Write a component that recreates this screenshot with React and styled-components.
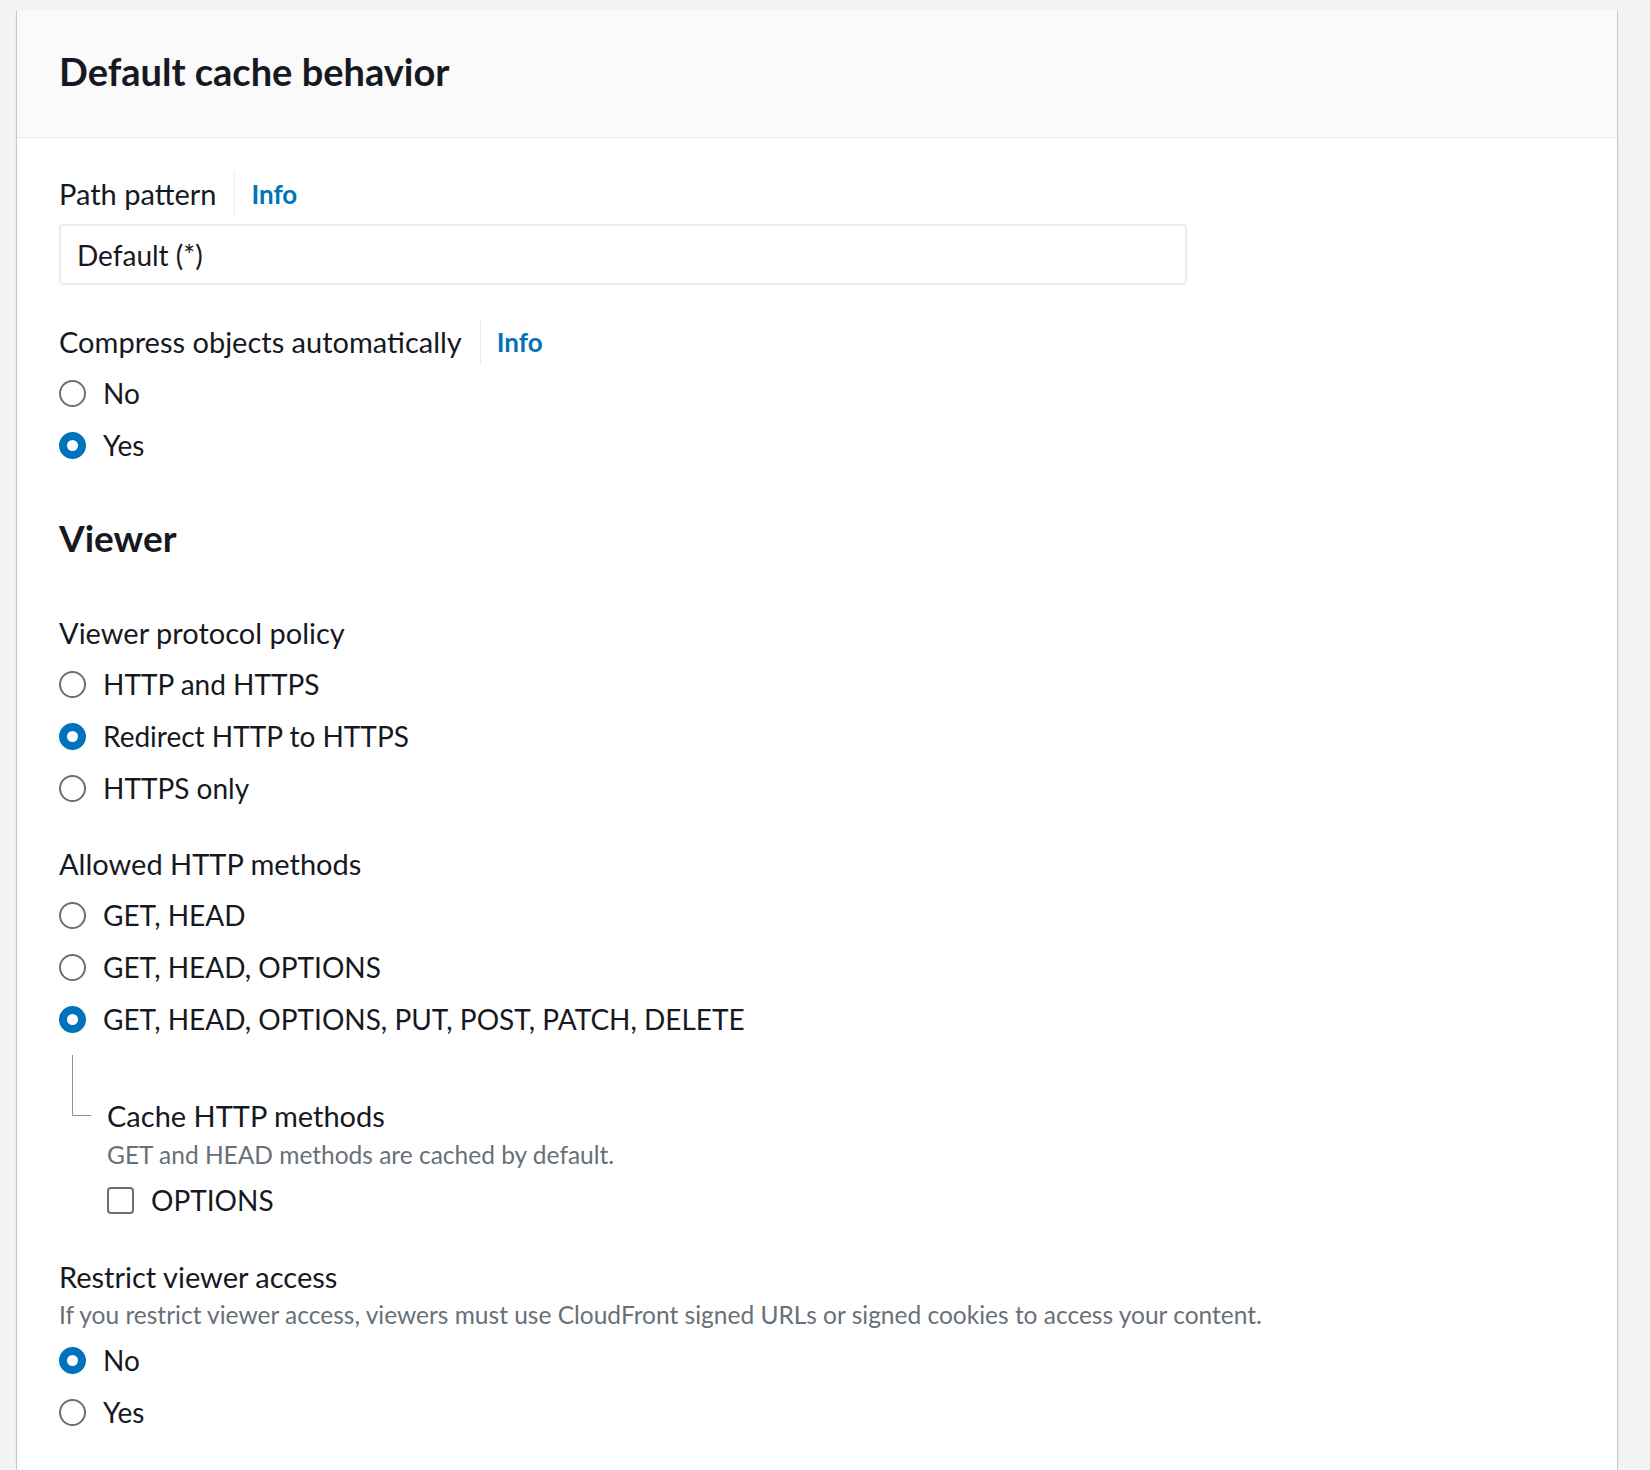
import React from 'react';
import styled, { createGlobalStyle } from 'styled-components';

const GlobalStyle = createGlobalStyle`
  body {
    margin: 0;
    background: #f2f3f3;
    font-family: Lato, "Noto Sans", "Liberation Sans", sans-serif;
    color: #16191f;
  }
`;

const Page = styled.div`
  padding: 10px 33px 0 17px;
  height: 1470px;
  box-sizing: border-box;
  overflow: hidden;
`;

const Card = styled.section`
  background: #fff;
  min-height: 1500px;
  box-shadow: 0 1px 1px 0 rgba(0, 28, 36, 0.3), 1px 1px 1px 0 rgba(0, 28, 36, 0.15),
    -1px 1px 1px 0 rgba(0, 28, 36, 0.15);
`;

const CardHeader = styled.header`
  background: #fafafa;
  border-bottom: 1px solid #eaeded;
  height: 128px;
  box-sizing: border-box;
  padding: 36px 42px 0;
`;

const Title = styled.h2`
  margin: 0;
  font-size: 38px;
  line-height: 50px;
  font-weight: 700;
`;

const CardBody = styled.div`
  padding: 34px 42px 40px;
  display: flex;
  flex-direction: column;
`;

const Field = styled.div`
  margin-top: ${p => p.$mt || 0}px;
  display: flex;
  flex-direction: column;
`;

const LabelRow = styled.div`
  display: flex;
  align-items: stretch;
  height: 44px;
`;

const Label = styled.span`
  font-size: 29px;
  line-height: 44px;
`;

const InfoLink = styled.a`
  margin-left: 18px;
  padding-left: 16px;
  border-left: 1px solid #eaeded;
  color: #0073bb;
  font-weight: 700;
  font-size: 26px;
  line-height: 44px;
  text-decoration: none;
`;

const Description = styled.div`
  font-size: 24.5px;
  line-height: ${p => p.$lh || 34}px;
  color: #687078;
`;

const TextInput = styled.div`
  margin-top: 8px;
  width: 1128px;
  height: 61px;
  box-sizing: border-box;
  border: 2px solid #eaeded;
  border-radius: 4px;
  padding: 0 16px;
  display: flex;
  align-items: center;
  font-size: 28px;
`;

const Options = styled.div`
  margin-top: ${p => p.$mt || 3}px;
  display: flex;
  flex-direction: column;
`;

const OptionRow = styled.label`
  display: flex;
  align-items: center;
  height: 52px;
  font-size: 28px;
  gap: 17px;
`;

const RadioDot = styled.span`
  width: 27px;
  height: 27px;
  box-sizing: border-box;
  border-radius: 50%;
  flex: none;
  border: ${p => (p.$checked ? '8px solid #0073bb' : '2px solid #687078')};
  background: #fff;
`;

const CheckBox = styled.span`
  width: 27px;
  height: 27px;
  box-sizing: border-box;
  border-radius: 4px;
  border: 2px solid #687078;
  background: #fff;
  flex: none;
`;

const SectionTitle = styled.h3`
  margin: ${p => p.$mt || 0}px 0 0;
  font-size: 37px;
  line-height: 50px;
  font-weight: 700;
`;

const Nested = styled.div`
  display: flex;
  margin-top: 10px;
  padding-left: 13px;
`;

const TreeLine = styled.div`
  width: 18px;
  height: 60px;
  border-left: 1px solid #879596;
  border-bottom: 1px solid #879596;
  flex: none;
`;

const NestedContent = styled.div`
  margin-left: 16px;
  padding-top: 39px;
  display: flex;
  flex-direction: column;
`;

const RadioGroup = ({ options, value, mt }) => (
  <Options $mt={mt}>
    {options.map(o => (
      <OptionRow key={o}>
        <RadioDot $checked={o === value} />
        {o}
      </OptionRow>
    ))}
  </Options>
);

export default function App() {
  return (
    <Page>
      <GlobalStyle />
      <Card>
        <CardHeader>
          <Title>Default cache behavior</Title>
        </CardHeader>
        <CardBody>
          <Field>
            <LabelRow>
              <Label>Path pattern</Label>
              <InfoLink href="#">Info</InfoLink>
            </LabelRow>
            <TextInput>Default (*)</TextInput>
          </Field>

          <Field $mt={35}>
            <LabelRow>
              <Label>Compress objects automatically</Label>
              <InfoLink href="#">Info</InfoLink>
            </LabelRow>
            <RadioGroup options={['No', 'Yes']} value="Yes" />
          </Field>

          <SectionTitle $mt={42}>Viewer</SectionTitle>

          <Field $mt={48}>
            <Label>Viewer protocol policy</Label>
            <RadioGroup
              options={['HTTP and HTTPS', 'Redirect HTTP to HTTPS', 'HTTPS only']}
              value="Redirect HTTP to HTTPS"
            />
          </Field>

          <Field $mt={28}>
            <Label>Allowed HTTP methods</Label>
            <RadioGroup
              options={['GET, HEAD', 'GET, HEAD, OPTIONS', 'GET, HEAD, OPTIONS, PUT, POST, PATCH, DELETE']}
              value="GET, HEAD, OPTIONS, PUT, POST, PATCH, DELETE"
            />
            <Nested>
              <TreeLine />
              <NestedContent>
                <Label>Cache HTTP methods</Label>
                <Description>GET and HEAD methods are cached by default.</Description>
                <Options $mt={2}>
                  <OptionRow>
                    <CheckBox />
                    OPTIONS
                  </OptionRow>
                </Options>
              </NestedContent>
            </Nested>
          </Field>

          <Field $mt={29}>
            <Label>Restrict viewer access</Label>
            <Description $lh={32}>
              If you restrict viewer access, viewers must use CloudFront signed URLs or signed cookies to access your content.
            </Description>
            <RadioGroup options={['No', 'Yes']} value="No" />
          </Field>
        </CardBody>
      </Card>
    </Page>
  );
}
